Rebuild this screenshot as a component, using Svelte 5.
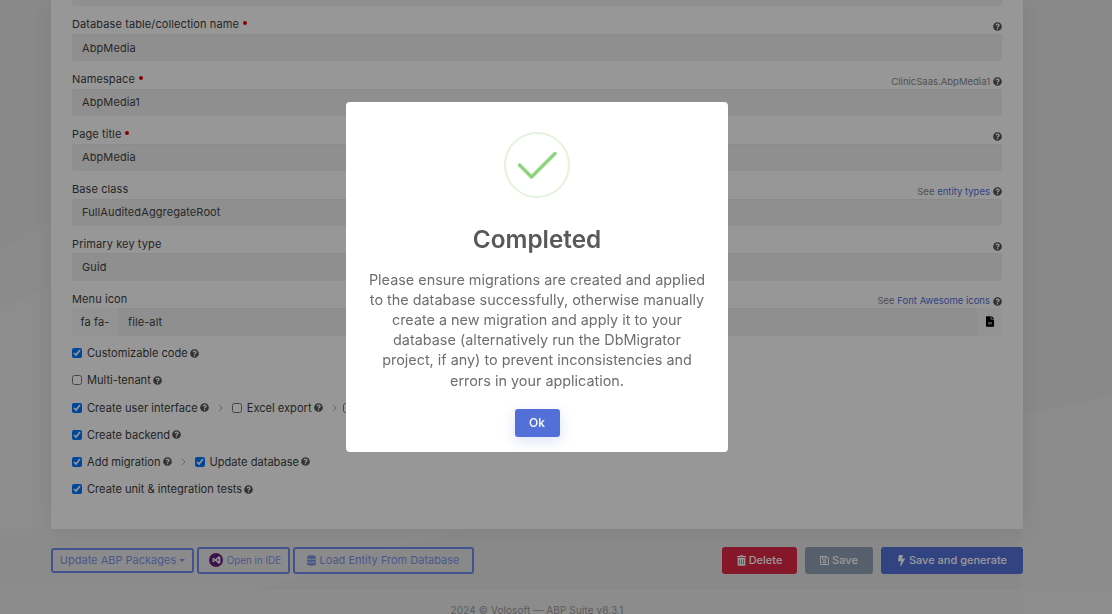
<script>
  const fields = [
    { label: 'Database table/collection name', value: 'AbpMedia', required: true },
    { label: 'Namespace', value: 'AbpMedia1', required: true, hint: 'ClinicSaas.AbpMedia1' },
    { label: 'Page title', value: 'AbpMedia', required: true },
    { label: 'Base class', value: 'FullAuditedAggregateRoot', hint: 'See ', link: 'entity types' },
    { label: 'Primary key type', value: 'Guid' }
  ];

  const checks = [
    [{ label: 'Customizable code', on: true }],
    [{ label: 'Multi-tenant', on: false }],
    [
      { label: 'Create user interface', on: true },
      { label: 'Excel export', on: false },
      { label: '', on: false }
    ],
    [{ label: 'Create backend', on: true }],
    [
      { label: 'Add migration', on: true },
      { label: 'Update database', on: true }
    ],
    [{ label: 'Create unit & integration tests', on: true }]
  ];
</script>

{#snippet help()}
  <svg class="help" viewBox="0 0 512 512" aria-hidden="true">
    <path d="M504 256c0 136.997-111.043 248-248 248S8 392.997 8 256C8 119.083 119.043 8 256 8s248 111.083 248 248zM262.655 90c-54.497 0-89.255 22.957-116.549 63.758-3.536 5.286-2.353 12.415 2.715 16.258l34.699 26.31c5.205 3.947 12.621 3.008 16.665-2.122 17.864-22.658 30.113-35.797 57.303-35.797 20.429 0 45.698 13.148 45.698 32.958 0 14.976-12.363 22.667-32.534 33.976C247.128 238.528 216 254.941 216 296v4c0 6.627 5.373 12 12 12h56c6.627 0 12-5.373 12-12v-1.333c0-28.462 83.186-29.647 83.186-106.667 0-58.002-60.165-102-116.531-102zM256 338c-25.365 0-46 20.635-46 46 0 25.364 20.635 46 46 46s46-20.636 46-46c0-25.365-20.635-46-46-46z" />
  </svg>
{/snippet}

<div class="page">
  <svg class="backdrop" viewBox="0 0 1112 614" preserveAspectRatio="none" aria-hidden="true">
    <path d="M0 312 C 20 300 40 290 60 280 L 60 540 L 0 540 Z" fill="#ebebeb" />
    <path d="M0 250 C 20 238 40 228 60 218 L 60 280 C 40 290 20 300 0 312 Z" fill="#e8e8e8" />
    <path d="M1112 395 C 1080 405 1050 410 1020 412 L 1020 614 L 1112 614 Z" fill="#e9e9e9" />
    <path d="M0 590 L 260 590 C 330 565 400 545 470 529 L 0 529 Z" fill="#e8e8e8" />
  </svg>

  <div class="main">
    <div class="card">
      <div class="input stub"></div>

      {#each fields as f}
        <div class="field">
          <div class="label-row">
            <span>{f.label}{#if f.required}<i class="req"></i>{/if}</span>
            <span class="hint">{#if f.hint}{f.hint}{/if}{#if f.link}<a href="#top">{f.link}</a>{/if}{@render help()}</span>
          </div>
          <div class="input">{f.value}</div>
        </div>
      {/each}

      <div class="field">
        <div class="label-row">
          <span>Menu icon</span>
          <span class="hint">See <a href="#top">Font Awesome icons</a>{@render help()}</span>
        </div>
        <div class="group">
          <span class="addon">fa fa-</span>
          <div class="input grow">file-alt</div>
          <span class="addon end">
            <svg viewBox="0 0 384 512" aria-hidden="true">
              <path d="M224 136V0H24C10.7 0 0 10.7 0 24v464c0 13.3 10.7 24 24 24h336c13.3 0 24-10.7 24-24V160H248c-13.2 0-24-10.8-24-24zm64 236c0 6.6-5.4 12-12 12H108c-6.6 0-12-5.4-12-12v-8c0-6.6 5.4-12 12-12h168c6.6 0 12 5.4 12 12v8zm0-64c0 6.6-5.4 12-12 12H108c-6.6 0-12-5.4-12-12v-8c0-6.6 5.4-12 12-12h168c6.6 0 12 5.4 12 12v8zm96-186v6H256V0h6.1c6.4 0 12.5 2.5 17 7l97.9 98c4.5 4.5 7 10.6 7 16.9z" />
            </svg>
          </span>
        </div>
      </div>

      <div class="checks">
        {#each checks as row}
          <div class="check-row">
            {#each row as c, i}
              {#if i > 0}
                <svg class="chev" viewBox="0 0 5 8" aria-hidden="true">
                  <path d="M.8.8 4 4 .8 7.200" fill="none" stroke="#a8a8a8" stroke-width="1" />
                </svg>
              {/if}
              <label class="check" class:bare={!c.label}>
                <input type="checkbox" checked={c.on} />
                {#if c.label}<span>{c.label}</span>{@render help()}{/if}
              </label>
            {/each}
          </div>
        {/each}
      </div>
    </div>

    <div class="actions">
      <div class="left">
        <button class="outline pkg">Update ABP Packages <i class="caret"></i></button>
        <button class="outline ide">
          <svg class="vs" viewBox="0 0 24 24" aria-hidden="true">
            <circle cx="12" cy="12" r="12" fill="#68217a" />
            <path d="M16.6 5.5 11 10.9 7.6 8.3 6.2 9v6l1.4.7 3.4-2.6 5.6 5.4 2.8-1.2V6.700zM8 13.700v-3.400L9.800 12zm8.300 1.200L13 12l3.300-2.900z" fill="#fff" fill-rule="evenodd" />
          </svg>
          Open in IDE
        </button>
        <button class="outline load">
          <svg class="ico" viewBox="0 0 448 512" aria-hidden="true">
            <path d="M448 73.143v45.714C448 159.143 347.667 192 224 192S0 159.143 0 118.857V73.143C0 32.857 100.333 0 224 0s224 32.857 224 73.143zM448 176v102.857C448 319.143 347.667 352 224 352S0 319.143 0 278.857V176c48.125 33.143 136.208 48.572 224 48.572S399.874 209.143 448 176zm0 160v102.857C448 479.143 347.667 512 224 512S0 479.143 0 438.857V336c48.125 33.143 136.208 48.572 224 48.572S399.874 369.143 448 336z" />
          </svg>
          Load Entity From Database
        </button>
      </div>
      <div class="right">
        <button class="solid danger">
          <svg class="ico" viewBox="0 0 448 512" aria-hidden="true">
            <path d="M32 464a48 48 0 0 0 48 48h288a48 48 0 0 0 48-48V128H32zm272-256a16 16 0 0 1 32 0v224a16 16 0 0 1-32 0zm-96 0a16 16 0 0 1 32 0v224a16 16 0 0 1-32 0zm-96 0a16 16 0 0 1 32 0v224a16 16 0 0 1-32 0zM432 32H312l-9.400-18.700A24 24 0 0 0 281.100 0H166.800a23.720 23.720 0 0 0-21.400 13.300L136 32H16A16 16 0 0 0 0 48v32a16 16 0 0 0 16 16h416a16 16 0 0 0 16-16V48a16 16 0 0 0-16-16z" />
          </svg>
          Delete
        </button>
        <button class="solid grey">
          <svg class="ico" viewBox="0 0 448 512" aria-hidden="true">
            <path d="M433.941 129.941l-83.882-83.882A48 48 0 0 0 316.118 32H48C21.490 32 0 53.490 0 80v352c0 26.510 21.490 48 48 48h352c26.510 0 48-21.490 48-48V163.882a48 48 0 0 0-14.059-33.941zM272 80v80H144V80h128zm122 352H54a6 6 0 0 1-6-6V86a6 6 0 0 1 6-6h42v104c0 13.255 10.745 24 24 24h176c13.255 0 24-10.745 24-24V83.882l78.243 78.243a6 6 0 0 1 1.757 4.243V426a6 6 0 0 1-6 6zM224 232c-48.523 0-88 39.477-88 88s39.477 88 88 88 88-39.477 88-88-39.477-88-88-88zm0 128c-22.056 0-40-17.944-40-40s17.944-40 40-40 40 17.944 40 40-17.944 40-40 40z" />
          </svg>
          Save
        </button>
        <button class="solid primary">
          <svg class="ico" viewBox="0 0 320 512" aria-hidden="true">
            <path d="M296 160H180.600l42.600-129.800C227.200 15 215.700 0 200 0H56C44 0 33.800 8.900 32.200 20.800l-32 240C-1.700 275.200 9.500 288 24 288h118.700L96.600 482.500c-3.600 15.200 8 29.500 23.300 29.500 8.400 0 16.400-4.400 20.800-12l176-304c9.300-15.900-2.200-36-20.700-36z" />
          </svg>
          Save and generate
        </button>
      </div>
    </div>

    <footer>2024 © Volosoft — ABP Suite v8.3.1</footer>
  </div>

  <div class="overlay">
    <div class="modal">
      <svg class="success" viewBox="0 0 66 66" aria-hidden="true">
        <circle cx="33" cy="33" r="32" fill="none" stroke="#e4f3dd" stroke-width="2" />
        <path d="M15.500 33 L27.500 45 L51 21.500" fill="none" stroke="#8cd57c" stroke-width="3.500" stroke-linecap="round" stroke-linejoin="round" />
      </svg>
      <h2>Completed</h2>
      <p>
        Please ensure migrations are created and applied to the database successfully, otherwise
        manually create a new migration and apply it to your database (alternatively run the
        DbMigrator project, if any) to prevent inconsistencies and errors in your application.
      </p>
      <button class="ok">Ok</button>
    </div>
  </div>
</div>

<style>
  :global(body) {
    margin: 0;
    font-family: Inter, 'Noto Sans', sans-serif;
  }

  .page {
    position: relative;
    height: 100vh;
    overflow: hidden;
    background: #e5e5e5;
    color: #3c3c3c;
    font-size: 11px;
    letter-spacing: 0.1px;
  }

  .backdrop {
    position: absolute;
    inset: 0;
    width: 100%;
    height: 100%;
  }

  .main {
    position: relative;
  }

  .card {
    width: 972px;
    height: 529px;
    margin-left: 51px;
    padding: 0 21px;
    box-sizing: border-box;
    background: #fcfcfc;
    box-shadow: 0 0 24px rgba(0, 0, 0, 0.08);
    overflow: hidden;
  }

  .stub {
    margin-top: -21px;
  }

  .input {
    height: 27.300px;
    padding: 0 10px;
    display: flex;
    align-items: center;
    background: #eeeeee;
    border-radius: 3px;
    box-shadow: inset 0 1px 0 #e8e8e8;
    font-size: 11px;
    color: #444;
  }

  .label-row {
    height: 27.600px;
    display: flex;
    justify-content: space-between;
    align-items: flex-end;
    box-sizing: border-box;
    padding-bottom: 1.500px;
    line-height: 16px;
  }

  .req {
    display: inline-block;
    width: 4px;
    height: 4px;
    margin: 0 0 3px 4px;
    border-radius: 50%;
    background: #e60000;
  }

  .hint {
    height: 16px;
    margin-bottom: -2.500px;
    display: inline-flex;
    align-items: center;
    white-space: pre;
    color: #888;
    font-size: 9.500px;
    letter-spacing: 0;
  }

  .hint a {
    color: #5370d8;
    text-decoration: none;
  }

  .help {
    width: 9px;
    height: 9px;
    margin-left: 3px;
    fill: #555;
    flex: none;
  }

  .group {
    display: flex;
    height: 27.300px;
  }

  .group .grow {
    flex: 1;
    border-radius: 0;
  }

  .addon {
    width: 46px;
    display: flex;
    align-items: center;
    justify-content: center;
    background: #f6f6f6;
    border-radius: 3px 0 0 3px;
  }

  .addon.end {
    width: 25px;
    border-radius: 0 3px 3px 0;
  }

  .addon svg {
    width: 8px;
    height: 11px;
    fill: #000;
  }

  .checks {
    padding-top: 4px;
  }

  .check-row {
    height: 27.200px;
    display: flex;
    align-items: center;
  }

  .check {
    display: flex;
    align-items: center;
    font-size: 11.100px;
    letter-spacing: 0;
  }

  .check .help {
    margin-left: 2px;
  }

  .check.bare {
    margin-left: -3px;
  }

  .check input {
    width: 10px;
    height: 10px;
    margin: 0 5px 0 0;
  }

  .chev {
    width: 5px;
    height: 8px;
    margin: 0 9px;
  }

  .actions {
    width: 972px;
    height: 61px;
    margin-left: 51px;
    box-sizing: border-box;
    padding-top: 18px;
    display: flex;
    justify-content: space-between;
    align-items: flex-start;
  }

  .left,
  .right {
    display: flex;
    align-items: center;
    gap: 3px;
  }

  .right {
    gap: 8px;
  }

  button {
    font-family: inherit;
    cursor: pointer;
  }

  .outline {
    height: 26.500px;
    padding: 0;
    display: flex;
    align-items: center;
    justify-content: center;
    gap: 3px;
    background: transparent;
    border: 2px solid #6f8bf0;
    border-radius: 3px;
    color: #7d93e8;
    font-size: 11px;
  }

  .pkg {
    width: 143px;
    height: 25.500px;
  }

  .ide {
    width: 93px;
    padding-left: 3px;
    font-size: 9.800px;
  }

  .load {
    width: 181px;
  }

  .vs {
    width: 14px;
    height: 14px;
    margin-right: 1px;
  }

  .caret {
    width: 0;
    height: 0;
    border: 3px solid transparent;
    border-top-color: currentColor;
    border-bottom: 0;
  }

  .ico {
    width: 9px;
    height: 11px;
    fill: currentColor;
  }

  .solid {
    height: 26.500px;
    padding: 0;
    display: flex;
    align-items: center;
    justify-content: center;
    gap: 3px;
    border: 0;
    border-radius: 3px;
    color: #fff;
    font-size: 11px;
    font-weight: 500;
  }

  .danger {
    width: 75px;
    background: #dc2846;
  }

  .grey {
    width: 68px;
    background: #8ea0b4;
  }

  .primary {
    width: 142px;
    background: #5370d8;
  }

  footer {
    height: 24px;
    box-sizing: border-box;
    padding-top: 14px;
    padding-right: 38px;
    text-align: center;
    background: rgba(255, 255, 255, 0.15);
    color: #999;
    font-size: 10px;
    line-height: 13px;
  }

  .overlay {
    position: fixed;
    inset: 0;
    background: rgba(0, 0, 0, 0.4);
  }

  .modal {
    position: absolute;
    left: 346px;
    top: 102px;
    width: 382px;
    height: 350px;
    box-sizing: border-box;
    padding-top: 30px;
    background: #fff;
    border-radius: 4px;
    text-align: center;
    letter-spacing: 0;
  }

  .success {
    display: block;
    width: 66px;
    height: 66px;
    margin: 0 auto;
  }

  h2 {
    margin: 26px 0 0;
    font-size: 24.300px;
    line-height: 30px;
    font-weight: 600;
    color: #595959;
  }

  p {
    margin: 15.500px 20px 0;
    font-size: 14.400px;
    line-height: 20.200px;
    color: #6e6e6e;
  }

  .ok {
    margin-top: 18px;
    width: 45px;
    height: 28.500px;
    border: 0;
    border-radius: 3px;
    background: #5370d8;
    color: #fff;
    font-size: 12px;
    font-weight: 500;
    box-shadow: 0 4px 14px rgba(83, 112, 216, 0.2);
  }
</style>
